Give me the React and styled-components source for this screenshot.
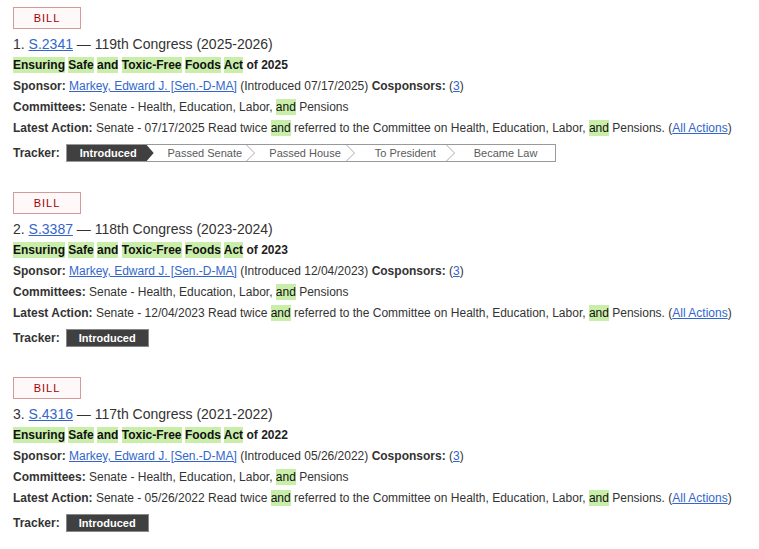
import React from "react";
import styled, { createGlobalStyle } from "styled-components";

const Global = createGlobalStyle`
  html, body { margin: 0; padding: 0; background: #fff; }
  body { font-family: "Liberation Sans", Arial, sans-serif; color: #333; }
`;

const List = styled.ol`
  list-style: none;
  margin: 0;
  padding: 7px 0 0 13px;
`;

const Item = styled.li`
  margin-bottom: 30px;
`;

const Badge = styled.span`
  display: inline-flex;
  align-items: center;
  justify-content: center;
  box-sizing: border-box;
  width: 68px;
  height: 22px;
  border: 1px solid #d49a9a;
  background: #fff8f8;
  color: #a00000;
  font-size: 11px;
  letter-spacing: 1px;
  vertical-align: top;
`;

const Heading = styled.div`
  margin-top: 4px;
  font-size: 14px;
  line-height: 22px;
  color: #333;
`;

const Link = styled.a`
  color: #3366cc;
  text-decoration: underline;
`;

const Title = styled.div`
  font-size: 12px;
  font-weight: bold;
  line-height: 21px;
  color: #222;
`;

const Hl = styled.span`
  background: #c8eeaa;
  color: #111;
  padding: 1px 0;
`;

const Line = styled.div`
  font-size: 12px;
  line-height: 21px;
  color: #333;
`;

const Label = styled.strong`
  font-size: 12px;
  font-weight: bold;
  color: #333;
`;

const TrackerRow = styled.div`
  display: flex;
  align-items: center;
  margin-top: 5px;
  gap: 6px;
  height: 18px;
`;

const Steps = styled.ol`
  display: flex;
  list-style: none;
  margin: 0;
  padding: 0;
  box-sizing: border-box;
  height: 18px;
  width: ${(p) => (p.$single ? "83px" : "490px")};
  border: 1px solid ${(p) => (p.$single ? "#888" : "#999")};
  background: ${(p) => (p.$single ? "#404040" : "#fff")};
`;

const Step = styled.li`
  position: relative;
  box-sizing: border-box;
  display: flex;
  align-items: center;
  justify-content: center;
  font-size: 11px;
  line-height: 16px;
  white-space: nowrap;
  ${(p) =>
    p.$active
      ? `
    flex: 0 0 ${p.$single ? "81px" : "87px"};
    background: #404040;
    color: #fff;
    font-weight: bold;
    padding-right: ${p.$single ? "0" : "4px"};
    ${p.$single ? "" : "clip-path: polygon(0 0, calc(100% - 7px) 0, 100% 50%, calc(100% - 7px) 100%, 0 100%);"}
  `
      : `
    flex: 1 1 0;
    color: #5a5a5a;
    padding-left: 2px;
  `}
  ${(p) =>
    !p.$active && !p.$last
      ? `
    &::after {
      content: "";
      position: absolute;
      right: -1px;
      top: 0;
      width: 9px;
      height: 16px;
      background: no-repeat center / 9px 16px url("data:image/svg+xml,%3Csvg xmlns='http://www.w3.org/2000/svg' width='9' height='16'%3E%3Cpolyline points='0.5,0 8.5,8 0.5,16' fill='none' stroke='%23aaa' stroke-width='1'/%3E%3C/svg%3E");
    }
  `
      : ""}
`;

const STAGES = ["Introduced", "Passed Senate", "Passed House", "To President", "Became Law"];

const titleWords = (year) => (
  <>
    <Hl>Ensuring</Hl> <Hl>Safe</Hl> <Hl>and</Hl> <Hl>Toxic-Free</Hl> <Hl>Foods</Hl> <Hl>Act</Hl> of {year}
  </>
);

const bills = [
  { n: 1, id: "S.2341", congress: "119th Congress (2025-2026)", year: 2025, date: "07/17/2025", full: true },
  { n: 2, id: "S.3387", congress: "118th Congress (2023-2024)", year: 2023, date: "12/04/2023", full: false },
  { n: 3, id: "S.4316", congress: "117th Congress (2021-2022)", year: 2022, date: "05/26/2022", full: false },
];

function Tracker({ full }) {
  if (!full) {
    return (
      <Steps $single>
        <Step $active $single>Introduced</Step>
      </Steps>
    );
  }
  return (
    <Steps>
      {STAGES.map((s, i) => (
        <Step key={s} $active={i === 0} $last={i === STAGES.length - 1}>
          {s}
        </Step>
      ))}
    </Steps>
  );
}

export default function App() {
  return (
    <>
      <Global />
      <List>
        {bills.map((b) => (
          <Item key={b.id}>
            <Badge>BILL</Badge>
            <Heading>
              {b.n}. <Link href="#">{b.id}</Link> — {b.congress}
            </Heading>
            <Title>{titleWords(b.year)}</Title>
            <Line>
              <Label>Sponsor:</Label> <Link href="#">Markey, Edward J. [Sen.-D-MA]</Link> (Introduced {b.date}){" "}
              <Label>Cosponsors:</Label> (<Link href="#">3</Link>)
            </Line>
            <Line>
              <Label>Committees:</Label> Senate - Health, Education, Labor, <Hl>and</Hl> Pensions
            </Line>
            <Line>
              <Label>Latest Action:</Label> Senate - {b.date} Read twice <Hl>and</Hl> referred to the Committee on
              Health, Education, Labor, <Hl>and</Hl> Pensions. (<Link href="#">All Actions</Link>)
            </Line>
            <TrackerRow>
              <Label>Tracker:</Label>
              <Tracker full={b.full} />
            </TrackerRow>
          </Item>
        ))}
      </List>
    </>
  );
}
